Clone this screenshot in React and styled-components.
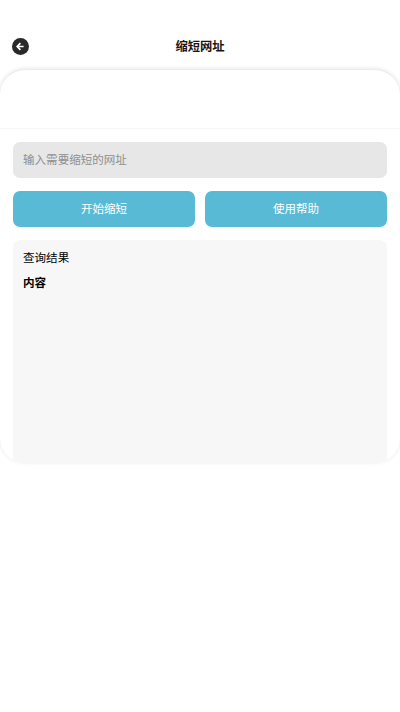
import React from 'react'
import styled, { createGlobalStyle } from 'styled-components'

const Global = createGlobalStyle`
  html, body {
    margin: 0;
    padding: 0;
    background: #fff;
    font-family: "Noto Sans CJK SC", "Liberation Sans", sans-serif;
  }
  * { box-sizing: border-box; }
`

function App() {
  return (
    <Page>
      <Global />
      <Header>
        <BackButton aria-label="back">
          <svg width="17" height="17" viewBox="0 0 17 17">
            <circle cx="8.5" cy="8.5" r="8.5" fill="#292929" />
            <path d="M8.4 5.2 5.2 8.5l3.2 3.3M5.6 8.5h6" fill="none" stroke="#fff" strokeWidth="1.7" />
          </svg>
        </BackButton>
        <Title>缩短网址</Title>
      </Header>
      <Card>
        <CardTop />
        <Body>
          <UrlInput placeholder="输入需要缩短的网址" />
          <Actions>
            <ActionButton>开始缩短</ActionButton>
            <ActionButton>使用帮助</ActionButton>
          </Actions>
          <Result>
            <ResultLabel>查询结果</ResultLabel>
            <ResultContent>内容</ResultContent>
          </Result>
        </Body>
      </Card>
    </Page>
  )
}

const Page = styled.div`
  width: 400px;
  height: 712px;
  overflow: hidden;
`

const Header = styled.header`
  position: relative;
  height: 70px;
  padding-top: 37px;
  text-align: center;
`

const BackButton = styled.button`
  position: absolute;
  left: 12px;
  top: 38px;
  width: 17px;
  height: 17px;
  padding: 0;
  border: 0;
  background: none;
  display: block;
  svg { display: block; }
`

const Title = styled.h1`
  margin: 0;
  font-size: 12.3px;
  line-height: 18px;
  font-weight: 700;
  color: #1c1414;
`

const Card = styled.main`
  height: 393px;
  border-radius: 25px;
  overflow: hidden;
  background: #fff;
  box-shadow: 0 -1px 4px rgba(0, 0, 0, 0.13);
  display: flex;
  flex-direction: column;
`

const CardTop = styled.div`
  height: 59px;
  flex: none;
  border-bottom: 1px solid #f5f5f5;
`

const Body = styled.div`
  flex: 1;
  min-height: 0;
  padding: 13px 13px 0;
  display: flex;
  flex-direction: column;
  gap: 13px;
`

const UrlInput = styled.input`
  flex: none;
  width: 100%;
  height: 36px;
  padding: 0 0 3px 10px;
  border: 0;
  border-radius: 7px;
  background: #e7e7e7;
  font: 400 11.55px "Noto Sans CJK SC", sans-serif;
  outline: none;
  &::placeholder { color: #8f8f8f; opacity: 1; }
`

const Actions = styled.div`
  flex: none;
  display: flex;
  gap: 10px;
`

const ActionButton = styled.button`
  flex: 1;
  height: 36px;
  padding: 0 0 3px;
  border: 0;
  border-radius: 7px;
  background: #59bad6;
  color: #fff;
  font: 400 11.55px "Noto Sans CJK SC", sans-serif;
`

const Result = styled.section`
  flex: 1;
  min-height: 0;
  padding: 8px 10px;
  border-radius: 7px 7px 0 0;
  background: #f7f7f7;
  color: #000;
  font-size: 11.55px;
`

const ResultLabel = styled.div`
  line-height: 18px;
`

const ResultContent = styled.div`
  margin-top: 7px;
  line-height: 18px;
  font-weight: 700;
`

export default App
